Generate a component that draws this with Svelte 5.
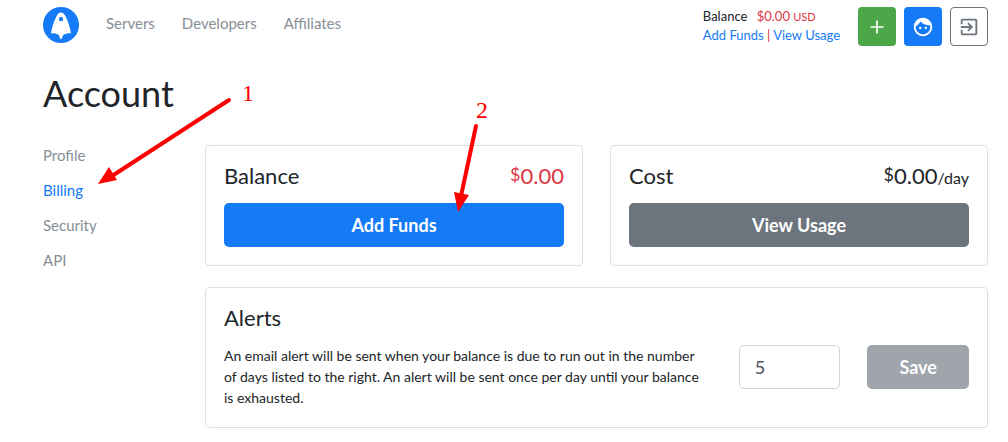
<script>
  let days = $state(5);

  const nav = ['Servers', 'Developers', 'Affiliates'];
  const sections = ['Profile', 'Billing', 'Security', 'API'];
  let current = $state('Billing');
</script>

<div class="page">
  <header>
    <a class="logo" href="/" aria-label="Home">
      <svg viewBox="0 0 36 36" width="36" height="36">
        <circle cx="18" cy="18" r="18" fill="#157af6" />
        <path fill="#fff" fill-rule="evenodd" d="M18 5.500C16 5.500 14.800 6.800 13.500 9.200C10.800 14.500 9 20 8 26.500C10.300 26 12.500 26.700 15.200 27.400C16.300 28.600 16.600 30.500 18 32.500C19.400 30.500 19.700 28.600 20.800 27.400C23.500 26.700 25.700 26 28 26.500C27 20 25.200 14.500 22.500 9.200C21.200 6.800 20 5.500 18 5.500ZM18 9.900a2.200 2.200 0 1 1 0 4.400 2.200 2.200 0 0 1 0-4.400z" />
      </svg>
    </a>
    <nav class="main-nav">
      {#each nav as item}
        <a href="#{item.toLowerCase()}">{item}</a>
      {/each}
    </nav>
    <div class="summary">
      <div>Balance <span class="amount">$0.00 <small>USD</small></span></div>
      <div class="links"><a href="#funds">Add Funds</a> | <a href="#usage">View Usage</a></div>
    </div>
    <div class="actions">
      <button class="icon green" aria-label="Create server">
        <svg viewBox="0 0 20 20" width="20" height="20">
          <path d="M10 3.500v13M3.500 10h13" stroke="#fff" stroke-width="1.700" />
        </svg>
      </button>
      <button class="icon blue" aria-label="Account">
        <svg viewBox="0 0 24 24" width="22" height="22" fill="#fff">
          <path d="M9 11.750c-.69 0-1.250.56-1.250 1.250s.56 1.250 1.250 1.250 1.250-.56 1.250-1.250-.56-1.250-1.250-1.250zm6 0c-.69 0-1.250.56-1.250 1.250s.56 1.250 1.250 1.250 1.250-.56 1.250-1.250-.56-1.250-1.250-1.250zM12 2C6.480 2 2 6.480 2 12s4.480 10 10 10 10-4.480 10-10S17.520 2 12 2zm0 18c-4.410 0-8-3.590-8-8 0-.29.020-.58.050-.86 2.360-1.050 4.230-2.980 5.210-5.370C11.070 8.330 14.050 10 17.420 10c.78 0 1.530-.09 2.250-.26.210.71.330 1.470.330 2.260 0 4.410-3.590 8-8 8z" />
        </svg>
      </button>
      <button class="icon outline" aria-label="Log out">
        <svg viewBox="0 0 24 24" width="22" height="22" fill="#6c757d">
          <path d="M10.090 15.590L11.500 17l5-5-5-5-1.410 1.410L12.670 11H3v2h9.670l-2.580 2.590zM19 3H5c-1.110 0-2 .9-2 2v4h2V5h14v14H5v-4H3v4c0 1.100.89 2 2 2h14c1.100 0 2-.9 2-2V5c0-1.100-.9-2-2-2z" />
        </svg>
      </button>
    </div>
  </header>

  <h1>Account</h1>

  <div class="content">
    <nav class="sidebar">
      {#each sections as section}
        <a
          href="#{section.toLowerCase()}"
          class:active={section === current}
          onclick={() => (current = section)}
        >{section}</a>
      {/each}
    </nav>

    <main>
      <section class="card">
        <div class="card-head">
          <h2>Balance</h2>
          <div class="price red"><sup>$</sup>0.00</div>
        </div>
        <button class="btn blue">Add Funds</button>
      </section>

      <section class="card">
        <div class="card-head">
          <h2>Cost</h2>
          <div class="price"><sup>$</sup>0.00<small>/day</small></div>
        </div>
        <button class="btn gray">View Usage</button>
      </section>

      <section class="card wide">
        <div class="card-head">
          <h2>Alerts</h2>
        </div>
        <form class="alerts" onsubmit={(e) => e.preventDefault()}>
          <label for="days">An email alert will be sent when your balance is due to run out in the number of days listed to the right. An alert will be sent once per day until your balance is exhausted.</label>
          <input id="days" type="text" inputmode="numeric" bind:value={days} />
          <button class="btn save">Save</button>
        </form>
      </section>
    </main>
  </div>

  <!-- step markers -->
  <svg class="steps" viewBox="0 0 520 220" width="520" height="220" aria-hidden="true">
    <g stroke="#f00" stroke-width="4" stroke-linecap="round">
      <path d="M229 100L112 176" />
      <path d="M476 126L461 196" />
    </g>
    <g fill="#f00">
      <path d="M98 184L109 167L117 180z" />
      <path d="M458 212L454 192L469 195z" />
    </g>
    <text x="242" y="101">1</text>
    <text x="476" y="118">2</text>
  </svg>
</div>

<style>
:global(body) {
  margin: 0;
  background: #fff;
}

.page {
  position: relative;
  padding: 7px 20px 14px 43px;
  font-family: Lato, "Liberation Sans", sans-serif;
  font-size: 14px;
  line-height: 21px;
  color: #212529;
}

a {
  color: #157af6;
  text-decoration: none;
}

header {
  display: flex;
  align-items: flex-start;
}

.logo {
  display: flex;
}

.main-nav {
  display: flex;
  gap: 27px;
  margin-left: 27px;
  padding-top: 6px;
  font-size: 15px;
}

.main-nav a, .sidebar a {
  color: #868e96;
}

.sidebar a.active {
  color: #157af6;
}

.summary {
  margin-left: auto;
  font-size: 13px;
  line-height: 18px;
}

.amount {
  margin-left: 6px;
  color: #dc3545;
}

.amount small {
  font-size: 11px;
}

.links {
  color: #dc3545;
}

.actions {
  display: flex;
  gap: 8px;
  margin-left: 18px;
}

button {
  font-family: inherit;
  border: 1px solid transparent;
  border-radius: 4px;
  cursor: pointer;
}

.icon {
  display: flex;
  align-items: center;
  justify-content: center;
  width: 38px;
  height: 39px;
  padding: 0;
}

.green {
  background: #4ba747;
}

.blue {
  background: #157af6;
}

.outline {
  background: #fff;
  border-color: #6c757d;
}

h1 {
  margin: 25px 0 29px;
  font-size: 36px;
  line-height: 45px;
  font-weight: 400;
}

h2 {
  margin: 0;
  font-size: 22px;
  font-weight: 400;
}

.content {
  display: grid;
  grid-template-columns: repeat(12, minmax(0, 1fr));
  column-gap: 27px;
}

.sidebar {
  grid-column: span 2;
  display: flex;
  flex-direction: column;
  gap: 14px;
  font-size: 15px;
}

main {
  grid-column: span 10;
  display: grid;
  grid-template-columns: 1fr 1fr;
  gap: 21px 27px;
}

.card {
  padding: 17px 18px 18px;
  border: 1px solid #dfdfdf;
  border-radius: 4px;
}

.wide {
  grid-column: span 2;
  padding-bottom: 19px;
}

.card-head {
  display: flex;
  justify-content: space-between;
  margin-bottom: 14px;
  line-height: 26px;
}

.price {
  height: 26px;
  font-size: 22px;
}

.price sup {
  font-size: 18px;
  line-height: 0;
  vertical-align: 3px;
}

.price small {
  font-size: 16px;
  line-height: 0;
}

.red {
  color: #dc3545;
}

.btn {
  display: block;
  width: 100%;
  height: 44px;
  padding: 0;
  border-radius: 5px;
  color: #fff;
  font-size: 18px;
  font-weight: 700;
}

.gray {
  background: #6c757d;
}

.save {
  background: #a0a5ab;
}

.alerts {
  display: grid;
  grid-template-columns: repeat(12, minmax(0, 1fr));
  column-gap: 27px;
  align-items: start;
}

.alerts label {
  grid-column: span 8;
  padding-right: 4px;
}

.alerts input {
  grid-column: span 2;
  box-sizing: border-box;
  width: 100%;
  height: 44px;
  padding: 0 15px;
  border: 1px solid #ced4da;
  border-radius: 5px;
  background: #fff;
  color: #495057;
  font-family: inherit;
  font-size: 18px;
}

.alerts .btn {
  grid-column: span 2;
}

.steps {
  position: absolute;
  top: 0;
  left: 0;
  pointer-events: none;
}

.steps text {
  font-family: "Liberation Serif", serif;
  font-size: 24px;
  fill: #f00;
}
</style>
